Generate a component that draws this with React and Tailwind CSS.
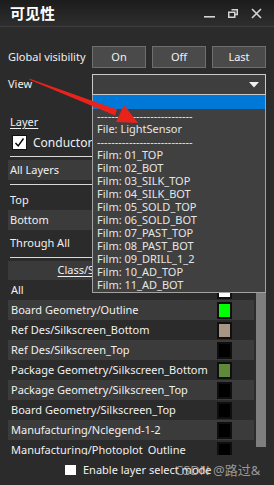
import React from "react";

const films = [
  "01_TOP", "02_BOT", "03_SILK_TOP", "04_SILK_BOT", "05_SOLD_TOP", "06_SOLD_BOT",
  "07_PAST_TOP", "08_PAST_BOT", "09_DRILL_1_2", "10_AD_TOP", "11_AD_BOT",
];

const layers = [
  { name: "All", swatch: "bg-[#ffffff]" },
  { name: "Board Geometry/Outline", swatch: "bg-[#00ff00]" },
  { name: "Ref Des/Silkscreen_Bottom", swatch: "bg-[#a89684]" },
  { name: "Ref Des/Silkscreen_Top", swatch: "bg-[#000000]" },
  { name: "Package Geometry/Silkscreen_Bottom", swatch: "bg-[#5f8a3a]" },
  { name: "Package Geometry/Silkscreen_Top", swatch: "bg-[#000000]" },
  { name: "Board Geometry/Silkscreen_Top", swatch: "bg-[#000000]" },
  { name: "Manufacturing/Nclegend-1-2", swatch: "bg-[#000000]" },
  { name: "Manufacturing/Photoplot_Outline", swatch: "bg-[#000000]" },
];

const dashes = "---------------------------";

function TitleBar() {
  return (
    <div className="h-[27px] flex items-center justify-between pl-[10px] pr-[12px] bg-gradient-to-b from-[#1c1c1c] to-[#2e2e2e] border-b border-[#3e3e3e]">
      <span className="text-[15px] font-bold text-white leading-none">可见性</span>
      <div className="flex items-center">
        <svg width="11" height="10" viewBox="0 0 11 10" className="mr-[13px] mt-[2px]">
          <rect x="0" y="7" width="11" height="1.6" fill="#d4d4d4" />
        </svg>
        <svg width="10" height="9" viewBox="0 0 10 9" className="mr-[13px]">
          <path d="M3.5 0.75 H9.25 V5.5 H7" fill="none" stroke="#d4d4d4" strokeWidth="1.5" />
          <rect x="0.75" y="3.25" width="6" height="5" fill="none" stroke="#d4d4d4" strokeWidth="1.5" />
        </svg>
        <svg width="11" height="11" viewBox="0 0 11 11">
          <path d="M1 1 L10 10 M10 1 L1 10" stroke="#d4d4d4" strokeWidth="1.6" />
        </svg>
      </div>
    </div>
  );
}

function Btn({ children }) {
  return (
    <div className="w-[54px] h-[22px] flex items-center justify-center bg-[#4a4a4a] border border-[#6e6e6e] text-[#f2f2f2]">
      {children}
    </div>
  );
}

function ViewDropdown() {
  return (
    <div className="relative w-[174px] h-[21px] bg-[#3e3e3e] border border-[#c9c9c9]">
      <svg width="10" height="6" viewBox="0 0 10 6" className="absolute right-[6px] top-[7px]">
        <path d="M0 0 H10 L5 5.5 Z" fill="#f0f0f0" />
      </svg>
      {/* open list */}
      <div className="absolute z-20 left-[-1px] top-[20px] w-[174px] bg-[#404040] border border-t-0 border-[#a2a2a2] pb-[1px] text-[#e6e6e6]">
        <div className="h-[14px] bg-[#0078d7]" />
        <div className="h-[13px] leading-[13px] pl-[4px] overflow-hidden">{dashes}</div>
        <div className="h-[13px] leading-[13px] pl-[4px]">File: LightSensor</div>
        <div className="h-[13px] leading-[13px] pl-[4px] overflow-hidden">{dashes}</div>
        {films.map((f) => (
          <div key={f} className="h-[13px] leading-[13px] pl-[4px] whitespace-nowrap">
            Film: {f}
          </div>
        ))}
      </div>
    </div>
  );
}

function Arrow() {
  return (
    <svg width="274" height="485" className="absolute left-0 top-0 z-30 pointer-events-none">
      <polygon points="29,78.5 30,80 115,115.5 117,109.5" fill="#e8231c" />
      <polygon points="124,105 116,122 138,123" fill="#e8231c" />
    </svg>
  );
}

export default function App() {
  return (
    <div className="relative w-[274px] h-[485px] overflow-hidden bg-[#2b2b2b] text-[11px] text-[#f0f0f0] font-['Noto_Sans','Noto_Sans_CJK_SC',sans-serif]">
      <TitleBar />
      <div className="px-[8px]">
        <div className="mt-[19px] flex items-center h-[22px]">
          <span className="w-[84px]">Global visibility</span>
          <div className="flex gap-[6px]">
            <Btn>On</Btn>
            <Btn>Off</Btn>
            <Btn>Last</Btn>
          </div>
        </div>

        <div className="mt-[6px] flex items-center h-[21px]">
          <span className="w-[84px]">View</span>
          <ViewDropdown />
        </div>

        <div className="mt-[20px] h-[13px] leading-[13px] pl-[2px]">
          <span className="underline underline-offset-2">Layer</span>
        </div>
        <div className="mt-[7px] h-[15px] flex items-center">
          <div className="ml-[4px] w-[15px] h-[15px] bg-white border border-[#111] flex items-center justify-center">
            <svg width="11" height="11" viewBox="0 0 11 11">
              <path d="M1.5 6 L4.2 9 L9.5 1.5" fill="none" stroke="#000" strokeWidth="1.4" />
            </svg>
          </div>
          <span className="ml-[6px] text-[12px]">Conductors</span>
        </div>
        <div className="mt-[6px] ml-[2px] h-px bg-[#d9d9d9]" />
        <div className="mt-[3px] h-[20px] flex items-center pl-[2px] bg-[#3b3b3b]">All Layers</div>
        <div className="mt-[4px] ml-[2px] h-px bg-[#d9d9d9]" />
        <div className="mt-[5px] h-[20px] flex items-center pl-[2px]">Top</div>
        <div className="h-[20px] flex items-center pl-[2px] bg-[#3b3b3b]">Bottom</div>
        <div className="mt-[3px] h-[20px] flex items-center pl-[2px]">Through All</div>
        <div className="mt-[4px] ml-[2px] h-px bg-[#d9d9d9]" />
        <div className="mt-[3px] h-[19px] flex items-center bg-[#3a3a3a]">
          <div className="w-[174px] text-center">
            <span className="underline underline-offset-2">Class/Subclass</span>
          </div>
          <div className="flex-1 text-center">Color</div>
        </div>

        <div className="flex h-[175px] overflow-hidden">
          <div className="w-[246px]">
            {layers.map((l, i) => (
              <div
                key={l.name}
                className={
                  "h-[20px] flex items-center pl-[3px] whitespace-nowrap " +
                  (i % 2 === 1 ? "bg-[#3b3b3b]" : "")
                }
              >
                <span className="flex-1">{l.name}</span>
                <div className={"mr-[22px] w-[15px] h-[17px] border-2 border-[#0f0f0f] " + l.swatch} />
              </div>
            ))}
          </div>
          <div className="ml-[2px] w-[10px] flex flex-col">
            <div className="h-[167px] bg-[#7e7e7e]" />
          </div>
        </div>

        <div className="mt-[10px] flex items-center pl-[57px] h-[10px]">
          <div className="w-[11px] h-[10px] bg-white" />
          <span className="ml-[7px]">Enable layer select mode</span>
        </div>
      </div>

      <div className="absolute left-[175px] top-[461px] text-[13px] leading-[18px] text-[#c8c8c8]/70">
        CSDN @路过&amp;
      </div>
      <Arrow />
    </div>
  );
}
